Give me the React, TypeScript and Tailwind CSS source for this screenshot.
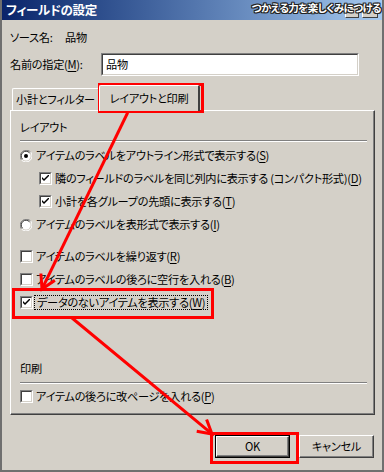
import type { ReactNode } from 'react';

const jp = "font-['Noto_Sans_CJK_JP',sans-serif] [font-feature-settings:'palt']";
const txt = 'text-[11.2px] tracking-[-0.3px] text-black leading-none';

function CheckBox({ checked }: { checked?: boolean }) {
    return (
        <div className="w-[13px] h-[13px] shrink-0 border border-t-[#808080] border-l-[#808080] border-r-white border-b-white">
            <div className="w-full h-full bg-white border border-t-[#404040] border-l-[#404040] border-r-[#d4d0c8] border-b-[#d4d0c8] flex items-center justify-center">
                {checked && (
                    <svg width="7" height="7" viewBox="0 0 7 7">
                        <path d="M0 2 L0 4 L2 6 L7 1 L7 -1 L2 4 Z" fill="#000" />
                    </svg>
                )}
            </div>
        </div>
    );
}

function Radio({ checked }: { checked?: boolean }) {
    return (
        <svg width="12" height="12" viewBox="0 0 12 12" className="shrink-0">
            <path d="M11 2.5 A5.5 5.5 0 0 0 1.5 10" stroke="#808080" fill="none" />
            <path d="M1.5 10 A5.5 5.5 0 0 0 10.5 1.8" stroke="#ffffff" fill="none" />
            <circle cx="6" cy="6" r="4.5" fill="#fff" />
            <path d="M9.5 2.8 A4.5 4.5 0 0 0 2.5 9.2" stroke="#404040" fill="none" />
            {checked && <circle cx="6" cy="6" r="2" fill="#000" />}
        </svg>
    );
}

function Row({ indent = false, gap = 'gap-[4px]', control, children }: { indent?: boolean; gap?: string; control: ReactNode; children: ReactNode }) {
    return (
        <div className={`h-[23px] flex items-center ${gap} ${indent ? 'pl-[19px]' : ''}`}>
            {control}
            <span className={`${txt} whitespace-nowrap`}>{children}</span>
        </div>
    );
}

function Key({ k }: { k: string }) {
    return (
        <>
            (<span className="underline underline-offset-[2px]">{k}</span>)
        </>
    );
}

function Section({ title }: { title: string }) {
    return <div className={`h-[16px] flex items-center ${txt}`}>{title}</div>;
}

function Separator({ mt }: { mt: string }) {
    return <div className={`${mt} w-[347px] h-[2px] border-t border-t-[#808080] border-b border-b-white`} />;
}

export default function App() {
    return (
        <div className={`relative w-[384px] h-[472px] bg-[#d4d0c8] border-x-2 border-b-2 border-[#6f6f6f] overflow-hidden ${jp}`}>

            {/* Title bar */}
            <div className="h-[20px] flex items-center justify-between bg-gradient-to-r from-[#0a246a] to-[#a6caf0] pl-[4px] pr-[4px]">
                <span className="text-white font-bold text-[12.5px] leading-none tracking-[-0.3px]">フィールドの設定</span>
                <div className="flex items-center gap-[3px] mt-[4px]">
                    <div className="w-[14px] h-[11px] bg-[#d4d0c8] border border-t-white border-l-white border-r-[#404040] border-b-[#404040]" />
                    <div className="w-[16px] h-[11px] bg-[#d4d0c8] border border-t-white border-l-white border-r-[#404040] border-b-[#404040]" />
                </div>
            </div>
            <span className="absolute right-[1px] top-[3px] text-white font-bold text-[10.5px] leading-none tracking-[-0.6px] [text-shadow:1px_1px_0_#222,-1px_-1px_0_#222,1px_-1px_0_#222,-1px_1px_0_#222,0_1px_0_#222,0_-1px_0_#222,1px_0_0_#222,-1px_0_0_#222]">
                つかえる力を楽しくみにつける
            </span>

            {/* Source name */}
            <div className={`mt-[10px] h-[16px] pl-[8px] flex items-center ${txt}`}>
                <span className="w-[55px]">ソース名:</span>
                <span>品物</span>
            </div>

            {/* Custom name */}
            <div className="mt-[7px] h-[23px] pl-[8px] flex items-center">
                <span className={`w-[91px] ${txt} whitespace-nowrap`}>名前の指定<Key k="M" />:</span>
                <div className="w-[258px] h-[23px] border border-t-[#808080] border-l-[#808080] border-r-white border-b-white">
                    <div className={`w-full h-full bg-white border border-t-[#404040] border-l-[#404040] border-r-[#d4d0c8] border-b-[#d4d0c8] flex items-center pl-[3px] ${txt}`}>
                        品物
                    </div>
                </div>
            </div>

            {/* Tabs */}
            <div className="mt-[8px] h-[26px] pl-[10px] flex items-end">
                <div className={`w-[87px] h-[22px] flex items-center justify-center ${txt} whitespace-nowrap border-t border-l border-white border-r border-r-[#404040] rounded-t-[2px]`}>
                    小計とフィルター
                </div>
                <div className={`relative z-10 -mb-px w-[101px] h-[26px] bg-[#d4d0c8] flex items-center justify-center ${txt} whitespace-nowrap border-t border-l border-white border-r-2 border-r-[#404040] rounded-t-[2px]`}>
                    レイアウトと印刷
                </div>
            </div>

            {/* Tab panel */}
            <div className="ml-[8px] w-[365px] h-[305px] border border-t-white border-l-white border-r-[#404040] border-b-[#404040] shadow-[inset_-1px_-1px_0_#808080] pl-[9px]">
                <div className="mt-[9px]">
                    <Section title="レイアウト" />
                </div>
                <Separator mt="mt-[4px]" />
                <div className="mt-[2px]">
                    <Row control={<Radio checked />}>アイテムのラベルをアウトライン形式で表示する<Key k="S" /></Row>
                    <Row indent gap="gap-[3px]" control={<CheckBox checked />}>隣のフィールドのラベルを同じ列内に表示する (コンパクト形式)<Key k="D" /></Row>
                    <Row indent gap="gap-[3px]" control={<CheckBox checked />}>小計を各グループの先頭に表示する<Key k="T" /></Row>
                    <Row control={<Radio />}>アイテムのラベルを表形式で表示する<Key k="I" /></Row>
                </div>
                <div className="mt-[9px]">
                    <Row gap="gap-[3px]" control={<CheckBox />}>アイテムのラベルを繰り返す<Key k="R" /></Row>
                    <Row gap="gap-[3px]" control={<CheckBox />}>アイテムのラベルの後ろに空行を入れる<Key k="B" /></Row>
                    <div className="h-[23px] flex items-center gap-[1px]">
                        <CheckBox checked />
                        <span className={`h-[15px] px-[2px] flex items-center border border-dotted border-black ${txt} whitespace-nowrap`}>
                            データのないアイテムを表示する<Key k="W" />
                        </span>
                    </div>
                </div>
                <div className="mt-[47px]">
                    <Section title="印刷" />
                </div>
                <Separator mt="mt-[5px]" />
                <div className="mt-[1px]">
                    <Row gap="gap-[3px]" control={<CheckBox />}>アイテムの後ろに改ページを入れる<Key k="P" /></Row>
                </div>
            </div>

            {/* Buttons */}
            <div className="mt-[20px] pr-[8px] flex justify-end gap-[9px]">
                <div className="w-[75px] h-[23px] border border-black">
                    <div className={`w-full h-full border border-t-white border-l-white border-r-[#404040] border-b-[#404040] shadow-[inset_-1px_-1px_0_#808080] flex items-center justify-center ${txt}`}>
                        OK
                    </div>
                </div>
                <div className={`w-[75px] h-[23px] border border-t-white border-l-white border-r-[#404040] border-b-[#404040] shadow-[inset_-1px_-1px_0_#808080] flex items-center justify-center ${txt}`}>
                    キャンセル
                </div>
            </div>

            {/* Red annotations */}
            <div className="absolute left-[96px] top-[83px] w-[106px] h-[30px] border-[3px] border-[#ff0000] pointer-events-none" />
            <div className="absolute left-[10px] top-[288px] w-[202px] h-[31px] border-[3px] border-[#ff0000] pointer-events-none" />
            <div className="absolute left-[208px] top-[432px] w-[89px] h-[32px] border-[3px] border-[#ff0000] pointer-events-none" />
            <svg className="absolute left-[-2px] top-0 pointer-events-none" width="384" height="472" viewBox="0 0 384 472">
                <g stroke="#ff0000" strokeWidth="3" fill="none" strokeLinecap="square">
                    <path d="M127 114 L42 289" />
                    <path d="M53.6 281.2 L42 289 L41 275" />
                    <path d="M72 318 L212 434" />
                    <path d="M207.1 420.9 L212 434 L198.2 431.6" />
                </g>
            </svg>
        </div>
    );
}
